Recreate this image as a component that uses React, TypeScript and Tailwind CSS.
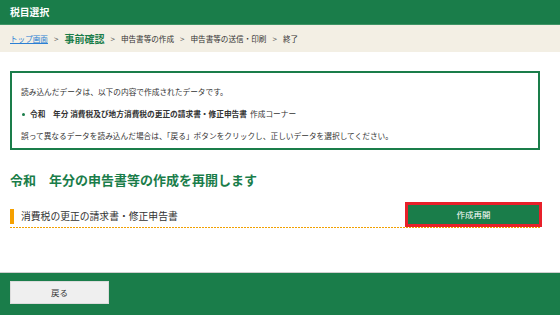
import React from 'react';

const font = { fontFamily: '"Noto Sans CJK JP", "Noto Sans", sans-serif' };

function Sep() {
  return <span className="text-[#555] text-[8px] px-[6px]">&gt;</span>;
}

export default function App() {
  return (
    <div className="w-[560px] h-[315px] bg-white flex flex-col overflow-hidden font-['Noto_Sans_CJK_JP',sans-serif]">
      <header className="h-[25px] bg-[#1a7d4a] border-b border-[#3f9466] px-[10px] flex items-center">
        <span className="text-white font-bold text-[9.8px]">税目選択</span>
      </header>

      <nav className="h-[27px] bg-[#f3efe4] px-[10px] flex items-center text-[7.6px] text-[#333]">
        <a className="text-[#2b7fd4] underline">トップ画面</a>
        <Sep />
        <span className="text-[#1a7d4a] font-bold text-[10px]">事前確認</span>
        <Sep />
        <span>申告書等の作成</span>
        <Sep />
        <span>申告書等の送信・印刷</span>
        <Sep />
        <span>終了</span>
      </nav>

      <main className="h-[220px] pl-[10px] pr-[20px] pt-[19px]">
        <div className="h-[79px] border-2 border-[#1a7d4a] pl-[9px] pt-[8px] text-[7.7px] leading-[22px] text-[#333]">
          <p>読み込んだデータは、以下の内容で作成されたデータです。</p>
          <p className="flex items-center">
            <span className="w-[3px] h-[3px] rounded-full bg-[#1a7d4a] ml-[1px] mr-[5px]" />
            <span className="font-bold">令和　年分 消費税及び地方消費税の更正の請求書・修正申告書</span>
            <span className="ml-[3px]">作成コーナー</span>
          </p>
          <p>誤って異なるデータを読み込んだ場合は、「戻る」ボタンをクリックし、正しいデータを選択してください。</p>
        </div>

        <h1 className="mt-[20px] text-[13px] leading-[20px] font-bold text-[#1a7d4a]">令和　年分の申告書等の作成を再開します</h1>

        <div className="mt-[11px] h-[26px] flex items-end justify-between">
          <div className="flex items-center gap-[7px] mb-[3px]">
            <span className="w-[4px] h-[15px] bg-[#f5a000]" />
            <span className="text-[9.8px] text-[#333]">消費税の更正の請求書・修正申告書</span>
          </div>
          <button className="w-[137px] h-[25px] -mr-[2px] border-[3px] border-[#e8202a] bg-[#1a7d4a] text-white text-[8.5px] flex items-center justify-center">
            作成再開
          </button>
        </div>
        <div className="h-[1px] bg-[repeating-linear-gradient(to_right,#f2a000_0_2px,#ffffff_2px_3px)]" />
      </main>

      <footer className="flex-1 border-t border-[#cfcfcf] bg-[#1a7d4a] px-[10px] pt-[8px]">
        <button className="w-[99px] h-[23px] bg-[#efefef] border border-[#dcdcdc] text-[8.5px] text-[#333] flex items-center justify-center" style={font}>
          戻る
        </button>
      </footer>
    </div>
  );
}
